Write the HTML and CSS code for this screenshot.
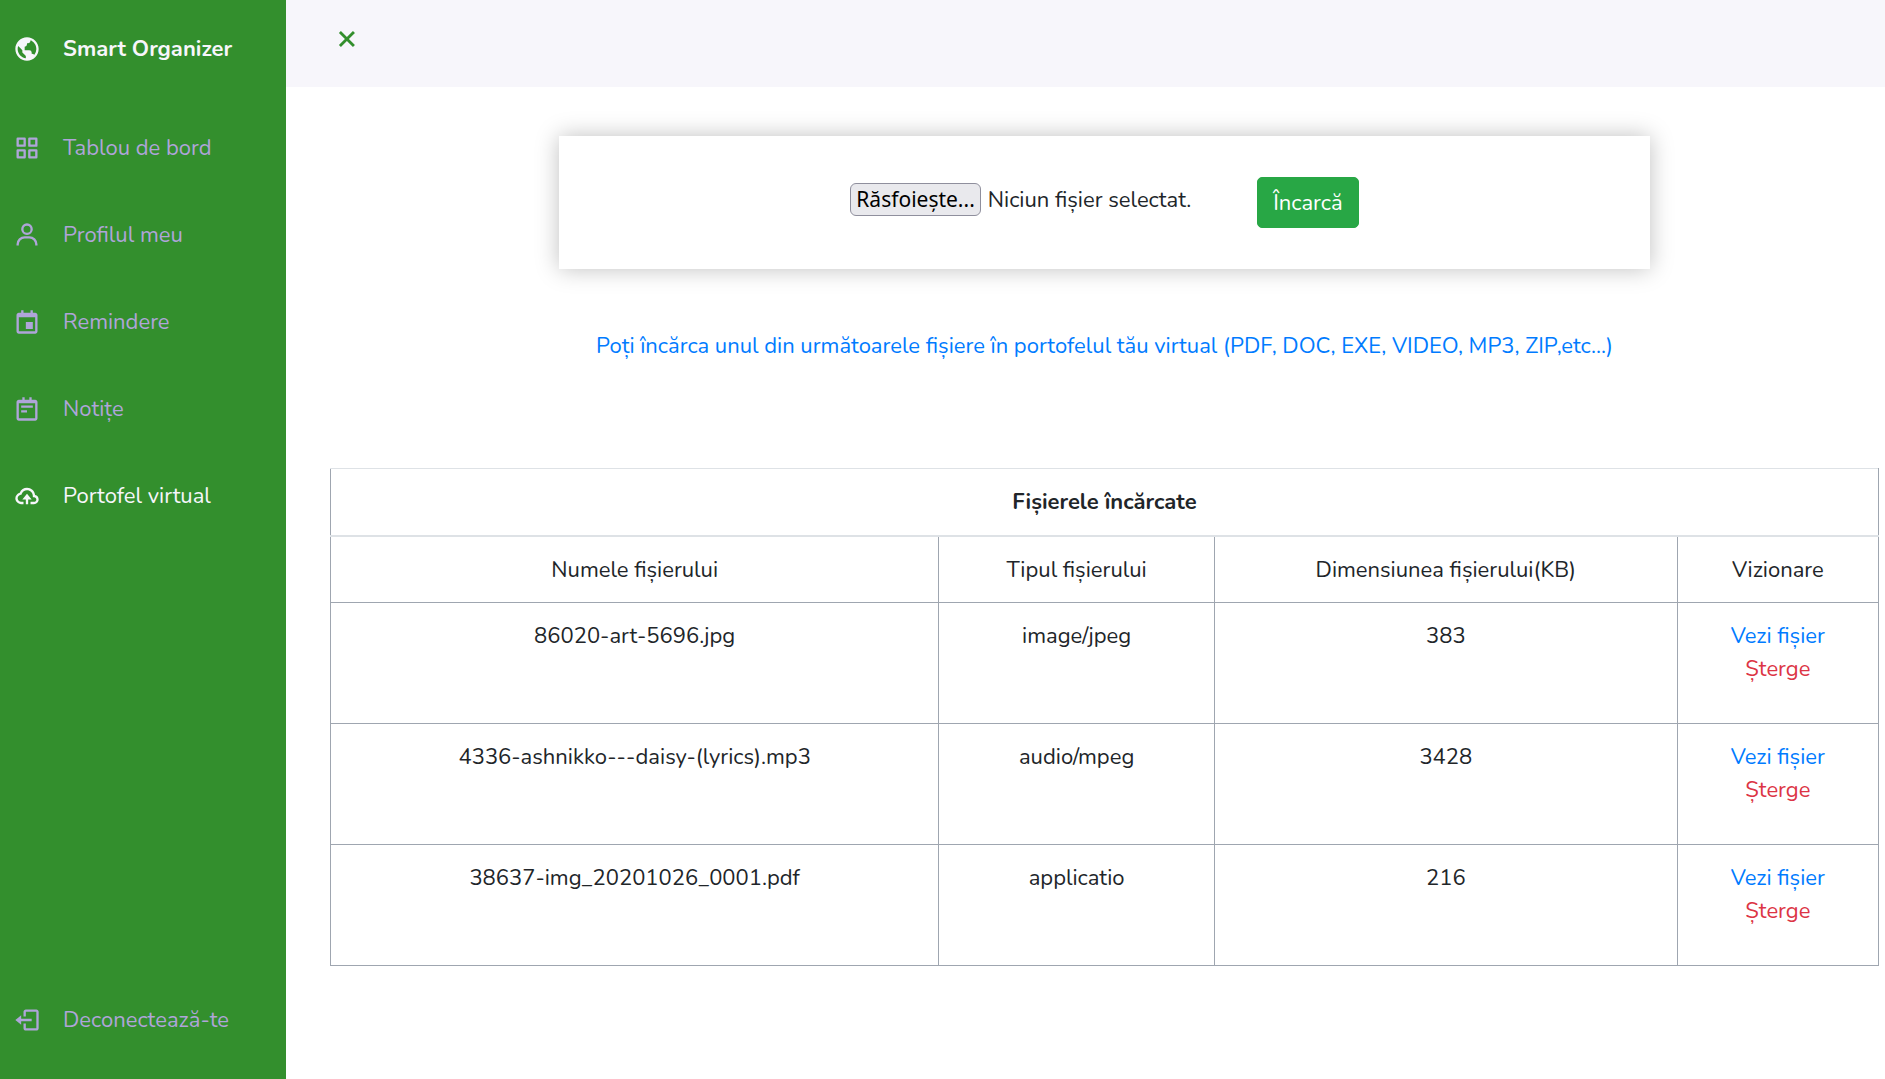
FILE: index.html
```html
<!DOCTYPE html>
<html lang="ro">
<head>
<meta charset="utf-8">
<meta name="viewport" content="width=device-width, initial-scale=1">
<title>Smart Organizer</title>
<link rel="stylesheet" href="styles.css">
</head>
<body>
<aside class="sidebar">
  <a class="link brand" href="#">
    <svg class="icon" viewBox="0 0 24 24" aria-hidden="true"><path d="M12 2C6.486 2 2 6.486 2 12s4.486 10 10 10 10-4.486 10-10S17.514 2 12 2zM4 12c0-.899.156-1.762.431-2.569L6 11l2 2v2l2 2 1 1v1.931C7.061 19.436 4 16.072 4 12zm14.33 4.873C17.677 16.347 16.687 16 16 16v-1a2 2 0 0 0-2-2h-4v-3a2 2 0 0 0 2-2V7h1a2 2 0 0 0 2-2v-.411C17.928 5.778 20 8.65 20 12a7.947 7.947 0 0 1-1.67 4.873z"/></svg>
    <span>Smart Organizer</span>
  </a>
  <nav class="menu">
    <a class="link" href="#">
      <svg class="icon" viewBox="0 0 24 24" aria-hidden="true"><path d="M10 3H4a1 1 0 0 0-1 1v6a1 1 0 0 0 1 1h6a1 1 0 0 0 1-1V4a1 1 0 0 0-1-1zM9 9H5V5h4v4zm11-6h-6a1 1 0 0 0-1 1v6a1 1 0 0 0 1 1h6a1 1 0 0 0 1-1V4a1 1 0 0 0-1-1zm-1 6h-4V5h4v4zm-9 4H4a1 1 0 0 0-1 1v6a1 1 0 0 0 1 1h6a1 1 0 0 0 1-1v-6a1 1 0 0 0-1-1zm-1 6H5v-4h4v4zm11-6h-6a1 1 0 0 0-1 1v6a1 1 0 0 0 1 1h6a1 1 0 0 0 1-1v-6a1 1 0 0 0-1-1zm-1 6h-4v-4h4v4z"/></svg>
      <span>Tablou de bord</span>
    </a>
    <a class="link" href="#">
      <svg class="icon" viewBox="0 0 24 24" aria-hidden="true"><path d="M12 2a5 5 0 1 0 5 5 5 5 0 0 0-5-5zm0 8a3 3 0 1 1 3-3 3 3 0 0 1-3 3zm9 11v-1a7 7 0 0 0-7-7h-4a7 7 0 0 0-7 7v1h2v-1a5 5 0 0 1 5-5h4a5 5 0 0 1 5 5v1z"/></svg>
      <span>Profilul meu</span>
    </a>
    <a class="link" href="#">
      <svg class="icon" viewBox="0 0 24 24" aria-hidden="true"><path d="M19 4h-2V2h-2v2H9V2H7v2H5c-1.103 0-2 .897-2 2v14c0 1.103.897 2 2 2h14c1.103 0 2-.897 2-2V6c0-1.103-.897-2-2-2zm0 16H5V8h14z"/><path d="M11 12h6v6h-6z"/></svg>
      <span>Remindere</span>
    </a>
    <a class="link" href="#">
      <svg class="icon" viewBox="0 0 24 24" aria-hidden="true"><path d="M19 4h-3V2h-2v2h-4V2H8v2H5c-1.103 0-2 .897-2 2v14c0 1.103.897 2 2 2h14c1.103 0 2-.897 2-2V6c0-1.103-.897-2-2-2zM5 20V7h14v13z"/><path d="M7 9h10v2H7zm0 4h5v2H7z"/></svg>
      <span>Notițe</span>
    </a>
    <a class="link active" href="#" aria-current="page">
      <svg class="icon" viewBox="0 0 24 24" aria-hidden="true"><path d="M13 19v-4h3l-4-5-4 5h3v4z"/><path d="M7 19h2v-2H7c-1.654 0-3-1.346-3-3 0-1.404 1.199-2.756 2.673-3.015l.581-.102.192-.558C8.149 8.274 9.895 7 12 7c2.757 0 5 2.243 5 5v1h1c1.103 0 2 .897 2 2s-.897 2-2 2h-3v2h3c2.206 0 4-1.794 4-4a4.01 4.01 0 0 0-3.056-3.888C18.507 7.67 15.56 5 12 5 9.244 5 6.85 6.611 5.757 9.15 3.609 9.792 2 11.82 2 14c0 2.757 2.243 5 5 5z"/></svg>
      <span>Portofel virtual</span>
    </a>
  </nav>
  <a class="link" href="#">
    <svg class="icon" viewBox="0 0 24 24" aria-hidden="true"><path d="m2 12 5 4v-3h9v-2H7V8z"/><path d="M20 3h-9c-1.103 0-2 .897-2 2v4h2V5h9v14h-9v-4H9v4c0 1.103.897 2 2 2h9c1.103 0 2-.897 2-2V5c0-1.103-.897-2-2-2z"/></svg>
    <span>Deconectează-te</span>
  </a>
</aside>
<div class="page">
  <header class="topbar">
    <button class="toggle" type="button" aria-label="Închide meniul">
      <svg class="toggle-icon" viewBox="0 0 24 24" aria-hidden="true"><path d="m16.192 6.344-4.243 4.242-4.242-4.242-1.414 1.414L10.535 12l-4.242 4.242 1.414 1.414 4.242-4.242 4.243 4.242 1.414-1.414L13.364 12l4.242-4.242z"/></svg>
    </button>
  </header>
  <main class="content">
    <form class="upload">
      <div class="picker">
        <input class="file-input" type="file" id="file">
        <label class="file-button" for="file">Răsfoiește...</label>
        <span>Niciun fișier selectat.</span>
      </div>
      <button class="submit" type="submit">Încarcă</button>
    </form>
    <p class="hint">Poți încărca unul din următoarele fișiere în portofelul tău virtual (PDF, DOC, EXE, VIDEO, MP3, ZIP,etc...)</p>
    <table class="files">
      <colgroup><col class="col-name"><col class="col-type"><col class="col-size"><col class="col-view"></colgroup>
      <thead>
        <tr><th colspan="4">Fișierele încărcate</th></tr>
      </thead>
      <tbody>
        <tr><td>Numele fișierului</td><td>Tipul fișierului</td><td>Dimensiunea fișierului(KB)</td><td>Vizionare</td></tr>
        <tr class="file"><td>86020-art-5696.jpg</td><td>image/jpeg</td><td>383</td><td><a class="view" href="#">Vezi fișier</a><a class="delete" href="#">Șterge</a></td></tr>
        <tr class="file"><td>4336-ashnikko---daisy-(lyrics).mp3</td><td>audio/mpeg</td><td>3428</td><td><a class="view" href="#">Vezi fișier</a><a class="delete" href="#">Șterge</a></td></tr>
        <tr class="file"><td>38637-img_20201026_0001.pdf</td><td>applicatio</td><td>216</td><td><a class="view" href="#">Vezi fișier</a><a class="delete" href="#">Șterge</a></td></tr>
      </tbody>
    </table>
  </main>
</div>
</body>
</html>
```
FILE: styles.css
```css
* {
  box-sizing: border-box;
}

body {
  display: flex;
  min-height: 100vh;
  margin: 0;
  background: #fff;
  color: #212529;
  font-family: Nunito, Lato, sans-serif;
  font-size: 22px;
  line-height: 33px;
}

a {
  text-decoration: none;
}

.sidebar {
  display: flex;
  flex: 0 0 286px;
  flex-direction: column;
  padding: 32px 13px 42px;
  background: #338f2d;
}

.link {
  display: flex;
  align-items: center;
  gap: 22px;
  color: #afa5d9;
  line-height: 34px;
}

.brand {
  margin-bottom: 65px;
  color: #f7f6fb;
  font-weight: 700;
}

.active {
  color: #f7f6fb;
}

.menu {
  display: flex;
  flex: 1;
  flex-direction: column;
  gap: 53px;
}

.icon {
  flex: none;
  width: 28px;
  height: 28px;
  fill: currentColor;
}

.page {
  flex: 1;
  min-width: 0;
}

.topbar {
  height: 87px;
  padding: 22px 44px;
  background: #f7f6fb;
}

.toggle {
  display: block;
  padding: 0;
  border: 0;
  background: none;
  color: #338f2d;
}

.toggle-icon {
  display: block;
  width: 34px;
  height: 34px;
  fill: currentColor;
}

.content {
  padding: 49px 6px 44px 44px;
}

.upload {
  display: flex;
  align-items: flex-start;
  justify-content: center;
  gap: 66px;
  width: 70.4%;
  margin: 0 auto;
  padding: 41px;
  box-shadow: 0 0 22px rgba(0, 0, 0, 0.25);
}

.picker {
  display: flex;
  align-items: baseline;
  gap: 7px;
  padding-top: 6px;
}

.file-input {
  position: absolute;
  width: 1px;
  height: 1px;
  opacity: 0;
}

.file-button {
  padding: 0 5px;
  border: 1px solid #8f8f9d;
  border-radius: 6px;
  background: #e9e9ed;
  color: #000;
  font-family: "Noto Sans", sans-serif;
  font-size: 21px;
  line-height: 31px;
}

.submit {
  padding: 9px 15px 7px;
  border: 1px solid #28a745;
  border-radius: 5px;
  background: #28a745;
  color: #fff;
  font: inherit;
}

.hint {
  margin: 61px 0 105px;
  color: #007bff;
  text-align: center;
}

.files {
  width: 100%;
  border-collapse: collapse;
  table-layout: fixed;
  text-align: center;
}

.col-name {
  width: 39.3%;
}

.col-type {
  width: 17.8%;
}

.col-size {
  width: 29.9%;
}

.col-view {
  width: 13%;
}

.files th,
.files td {
  padding: 17px 16px 15px;
  border: 1px solid #9fa6b0;
  vertical-align: top;
}

.files th {
  padding-bottom: 16px;
  border-top-color: #dee2e6;
  border-bottom: 2px solid #dee2e6;
}

.files .file td {
  padding-bottom: 37px;
}

.view,
.delete {
  display: block;
  color: #007bff;
}

.delete {
  color: #dc3545;
}
```
